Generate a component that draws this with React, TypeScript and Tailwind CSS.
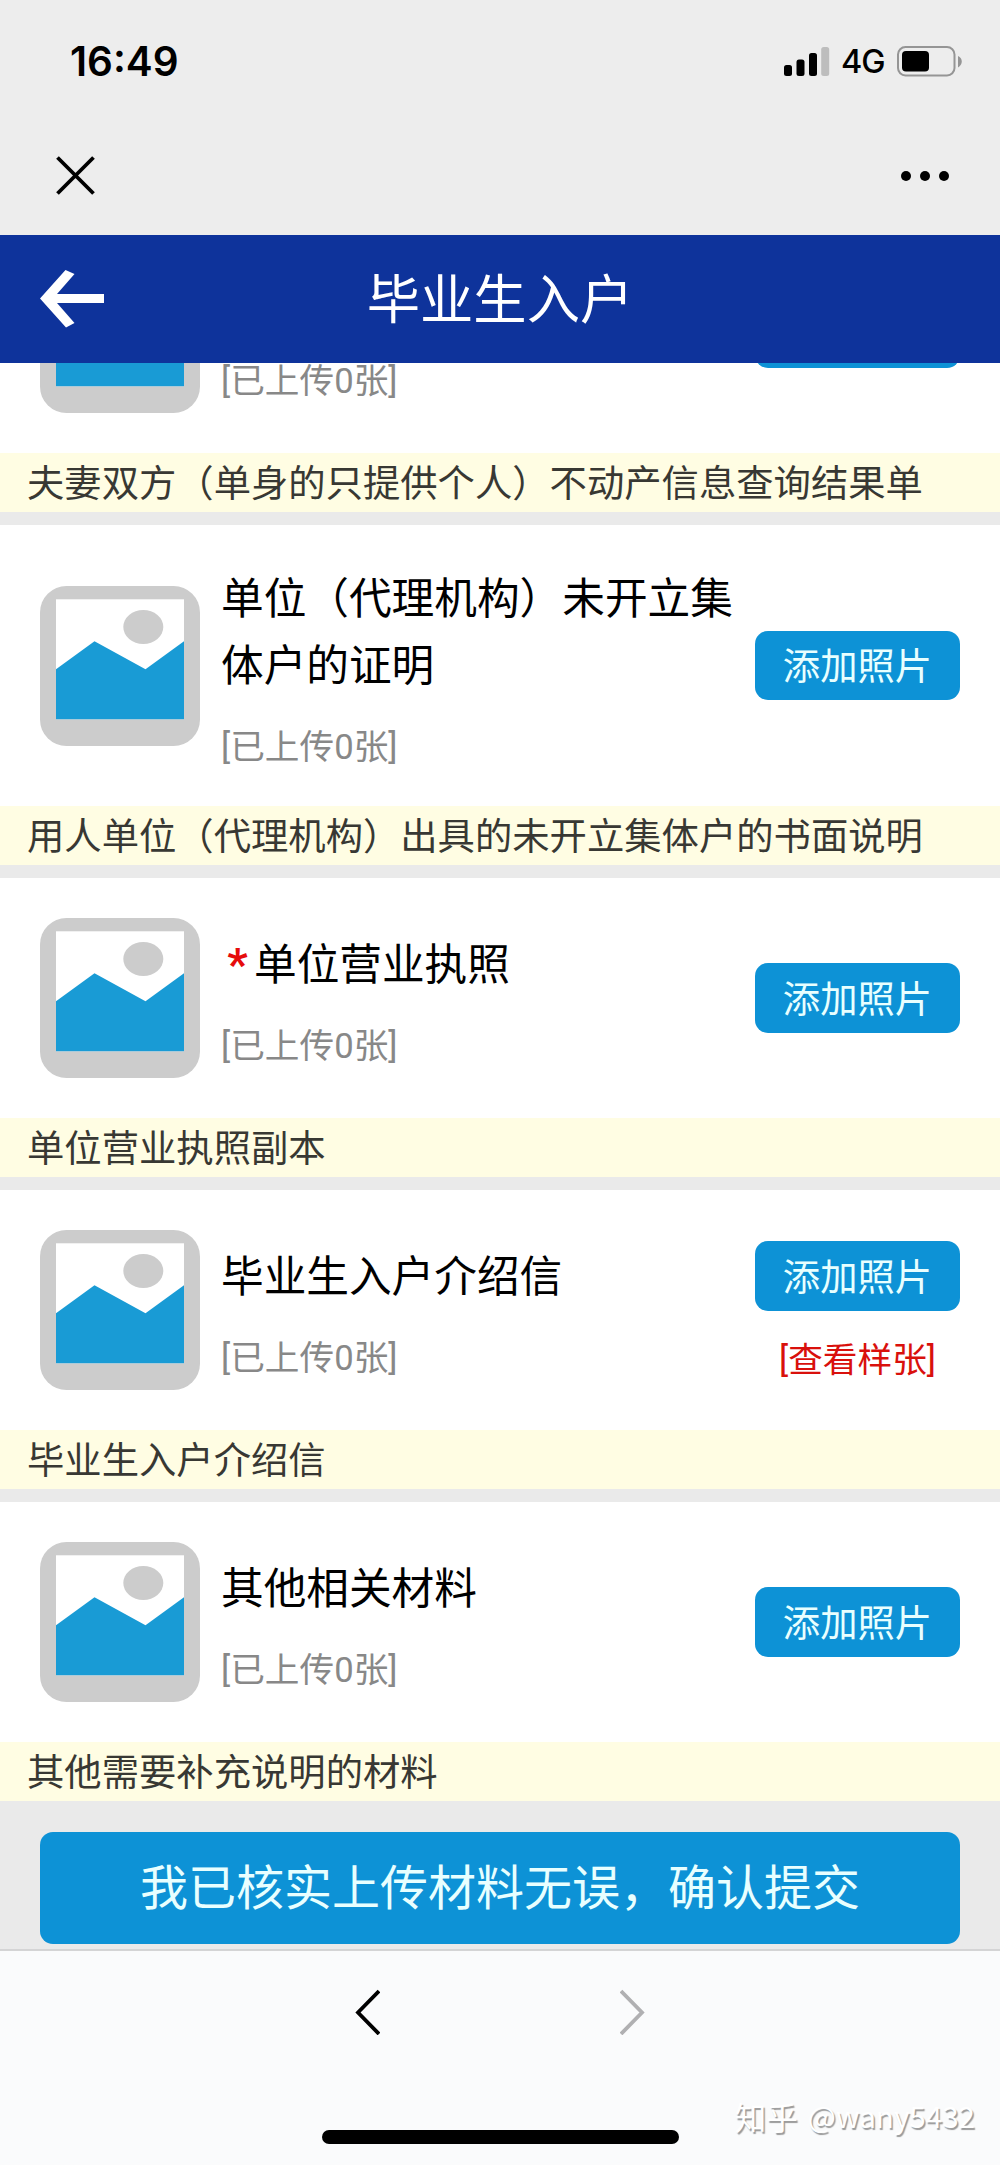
import { clsx } from 'clsx';

interface Material {
    title: string;
    hint: string;
    required?: boolean;
    hasSample?: boolean;
}

const materials: Material[] = [
    {
        title: '',
        hint: '夫妻双方（单身的只提供个人）不动产信息查询结果单',
    },
    {
        title: '单位（代理机构）未开立集体户的证明',
        hint: '用人单位（代理机构）出具的未开立集体户的书面说明',
    },
    { title: '单位营业执照', hint: '单位营业执照副本', required: true },
    { title: '毕业生入户介绍信', hint: '毕业生入户介绍信', hasSample: true },
    { title: '其他相关材料', hint: '其他需要补充说明的材料' },
];

function StatusBar() {
    return (
        <div className="flex h-[122px] items-center justify-between pl-[70px] pr-[38px]">
            <span className="pt-[2px] font-['Inter'] text-[40.4px] font-semibold leading-none">
                16:49
            </span>
            <div className="flex items-center">
                <svg className="h-[29px] w-[46px]" viewBox="0 0 46 29">
                    <rect x="0" y="18" width="8" height="11" rx="2.5" />
                    <rect x="12.5" y="12.5" width="8" height="16.5" rx="2.5" />
                    <rect x="25" y="6" width="8" height="23" rx="2.5" />
                    <rect x="37.2" y="0" width="8" height="29" rx="2.5" fill="#bdbdbd" />
                </svg>
                <span className="ml-[11px] w-[56px] pt-[3px] font-['Inter'] text-[32.5px] font-medium leading-none tracking-[-1px]">
                    4G
                </span>
                <svg className="h-[31px] w-[65px]" viewBox="0 0 65 31">
                    <rect x="1" y="1" width="56.5" height="28.5" rx="7.5" fill="none" stroke="#959595" strokeWidth="2" />
                    <rect x="5" y="5" width="27" height="20.5" rx="4" />
                    <path d="M61 10 C66 12 66 19 61 21.5 Z" fill="#959595" />
                </svg>
            </div>
        </div>
    );
}

function BrowserBar() {
    return (
        <div className="flex h-[113px] items-start justify-between pl-[56px] pr-[51px] pt-[34px]">
            <svg className="h-[39px] w-[39px]" viewBox="0 0 39 39" fill="none" stroke="#000" strokeWidth="3.8">
                <path d="M1.5 1.5 L37.5 37.5 M37.5 1.5 L1.5 37.5" />
            </svg>
            <div className="flex gap-[9px] pt-[15px]">
                <i className="h-[10px] w-[10px] rounded-full bg-black" />
                <i className="h-[10px] w-[10px] rounded-full bg-black" />
                <i className="h-[10px] w-[10px] rounded-full bg-black" />
            </div>
        </div>
    );
}

function PageHeader() {
    return (
        <header className="grid h-[128px] grid-cols-[104px_1fr_104px] items-center bg-[#0e339b] text-white">
            <svg className="h-[58px] w-[64px] justify-self-end" viewBox="0 0 64 58" fill="#fff">
                <path d="M0 28.5 L25.5 0 L34.5 4 L17 24 H64 V33 H17 L34.5 53 L26 57.5 Z" />
            </svg>
            <h1 className="pb-[6px] text-center text-[53.3px] font-normal leading-none">
                毕业生入户
            </h1>
        </header>
    );
}

function PictureIcon() {
    return (
        <svg className="h-[160px] w-[160px] shrink-0" viewBox="0 0 160 160">
            <rect width="160" height="160" rx="26.5" fill="#ccc" />
            <rect x="16" y="13.3" width="128" height="120" fill="#fff" />
            <ellipse cx="103.3" cy="41" rx="20" ry="17" fill="#ccc" />
            <path d="M16 83.3 L54.5 55.3 L105.5 83.3 L144 55.3 V133.3 H16 Z" fill="#199bd5" />
        </svg>
    );
}

function MaterialCard({ title, hint, required, hasSample }: Material) {
    return (
        <section>
            <div className="flex items-center bg-white px-10 py-10">
                <PictureIcon />
                <div className="-mt-[3px] mb-[3px] ml-[21px] w-[534px]">
                    <h3 className="min-h-[67px] text-[42.67px] font-normal leading-[67px] text-black">
                        {required && (
                            <span className="inline-block w-[33px] text-center font-['Roboto'] text-[45px] font-bold leading-none text-[#e60c0c]">
                                *
                            </span>
                        )}
                        {title}
                    </h3>
                    <p className="-mb-[2px] mt-[33px] font-['Roboto','Noto_Sans_CJK_SC',sans-serif] text-[34.67px] leading-[36px] text-[#888]">
                        [已上传0张]
                    </p>
                </div>
                <div className="flex w-[205px] flex-col items-center">
                    <button className="h-[69.5px] w-full rounded-[13px] bg-[#0d92d6] pb-px text-[37.33px] leading-none text-[#e8ffff]">
                        {title && '添加照片'}
                    </button>
                    {hasSample && (
                        <a className="mt-[30px] font-['Roboto','Noto_Sans_CJK_SC',sans-serif] text-[34.67px] leading-[38px] text-[#d9100c]">
                            [查看样张]
                        </a>
                    )}
                </div>
            </div>
            <p className="h-[59px] bg-[#fffde3] pl-[27px] text-[37.33px] leading-[56px] text-[#383833]">
                {hint}
            </p>
        </section>
    );
}

function BottomNav() {
    return (
        <nav className="flex h-[214px] flex-col items-center bg-[#fafbfc]">
            <div className="flex w-full justify-between pl-[355px] pr-[355px] pt-[38px]">
                <svg className="h-[46px] w-[25px]" viewBox="0 0 25 46" fill="none" stroke="#000" strokeWidth="3.8">
                    <path d="M24 2 L3 23.5 L24 45" />
                </svg>
                <svg className="h-[46px] w-[25px]" viewBox="0 0 25 46" fill="none" stroke="#b0b0b2" strokeWidth="3.8">
                    <path d="M1 2 L22 23.5 L1 45" />
                </svg>
            </div>
            <div className="mt-[95px] h-[14px] w-[357px] rounded-full bg-black" />
        </nav>
    );
}

export default function App() {
    return (
        <div className="relative flex h-[2165px] w-[1000px] flex-col overflow-hidden bg-[#ededed] font-['Noto_Sans_CJK_SC',sans-serif] text-black">
            <StatusBar />
            <BrowserBar />
            <PageHeader />

            {/* list is scrolled, so the first card is cut off by the header */}
            <main className="flex h-[1586px] flex-col justify-end overflow-hidden bg-[#eaeaea]">
                {materials.map((item, i) => (
                    <div key={item.hint} className={clsx('shrink-0', i > 0 && 'mt-[13px]')}>
                        <MaterialCard {...item} />
                    </div>
                ))}
                <div className="shrink-0 px-10 pb-[5px] pt-[30.5px]">
                    <button className="h-[112.5px] w-full rounded-[13px] bg-[#0d92d6] pb-[8px] text-[48px] leading-none text-[#e8ffff]">
                        我已核实上传材料无误，确认提交
                    </button>
                </div>
            </main>

            <div className="h-[2px] bg-[#d4d4d5]" />
            <BottomNav />

            <div className="absolute right-[25px] top-[2095px] flex gap-[10px] whitespace-nowrap leading-[42px] text-white [text-shadow:1.5px_1.5px_1px_#999]">
                <span className="text-[31.5px]">知乎</span>
                <span className="text-[29.6px]">@wany5432</span>
            </div>
        </div>
    );
}
